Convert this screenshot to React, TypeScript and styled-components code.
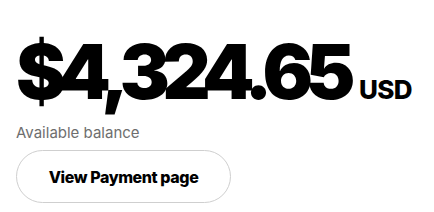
import React from "react";
import styled, { createGlobalStyle } from "styled-components";

const Global = createGlobalStyle`
  html, body { margin: 0; padding: 0; background: #fff; }
  body { font-family: "Inter", "Lato", sans-serif; }
`;

const Card = styled.div`
  display: flex;
  flex-direction: column;
  align-items: flex-start;
  padding: 24px 16px 0 16px;
`;

const AmountRow = styled.div`
  display: flex;
  align-items: baseline;
  gap: 11px;
`;

const Amount = styled.span`
  font-family: "Inter", sans-serif;
  font-weight: 900;
  font-size: 75px;
  line-height: 96px;
  letter-spacing: -7.6px;
  color: #000;
`;

const Currency = styled.span`
  font-family: "Inter", sans-serif;
  font-weight: 800;
  font-size: 26px;
  letter-spacing: -0.6px;
  color: #000;
`;

const Label = styled.div`
  font-family: "Inter", sans-serif;
  font-size: 15px;
  line-height: 20px;
  color: #6e6e6e;
  margin-top: 3px;
`;

const Button = styled.button`
  margin-top: 7px;
  width: 215px;
  height: 53px;
  border: 1px solid #cfcfcf;
  border-radius: 27px;
  background: #fff;
  font-family: "Inter", sans-serif;
  font-weight: 800;
  font-size: 16px;
  color: #000;
  letter-spacing: -0.4px;
  cursor: pointer;
`;

export default function App() {
  return (
    <>
      <Global />
      <Card>
        <AmountRow>
          <Amount>$4,324.65</Amount>
          <Currency>USD</Currency>
        </AmountRow>
        <Label>Available balance</Label>
        <Button>View Payment page</Button>
      </Card>
    </>
  );
}
